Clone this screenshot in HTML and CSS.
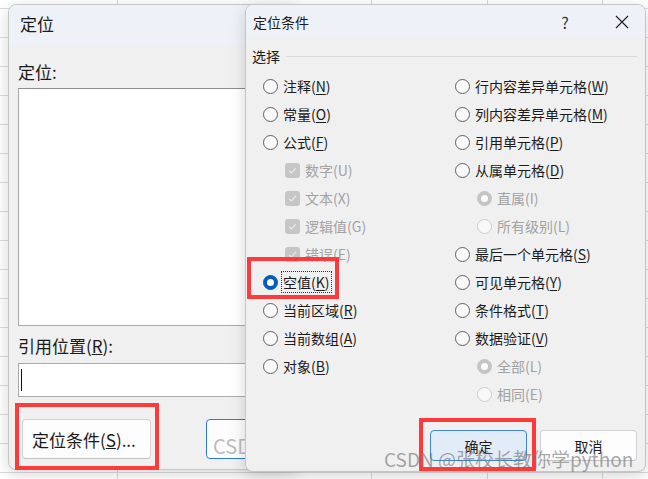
FILE: index.html
```html
<!DOCTYPE html>
<html lang="zh-CN">
  <head>
    <meta charset="UTF-8" />
    <title>定位条件</title>
    <link rel="stylesheet" href="styles.css">
  </head>
  <body>
    <div class="sheet">
      <!-- 定位 dialog (behind) -->
      <div class="dialog goto">
        <div class="titlebar">定位</div>
        <div class="goto-body">
          <div class="label">定位:</div>
          <div class="listbox"></div>
          <div class="label label-ref">引用位置(<u>R</u>):</div>
          <div class="textbox"><span class="caret"></span></div>
          <div class="goto-buttons">
            <button class="btn btn-special">定位条件(<u>S</u>)...</button>
            <button class="btn btn-ok-back"><span class="ghost">CSD</span></button>
          </div>
        </div>
      </div>

      <!-- 定位条件 dialog -->
      <div class="dialog special">
        <div class="titlebar">
          <span class="title">定位条件</span>
          <span class="tb-help">?</span>
          <span class="tb-close">
            <svg width="14" height="14" viewBox="0 0 14 14"><path d="M1 1 L13 13 M13 1 L1 13" stroke="#222" stroke-width="1.2" fill="none"/></svg>
          </span>
        </div>

        <div class="group-head">
          <span>选择</span>
          <span class="group-line"></span>
        </div>

        <div class="options">
          <div class="col col-left">
            <div class="opt"><span class="radio"></span><span>注释(<u>N</u>)</span></div>
            <div class="opt"><span class="radio"></span><span>常量(<u>O</u>)</span></div>
            <div class="opt"><span class="radio"></span><span>公式(<u>F</u>)</span></div>
            <div class="opt sub disabled"><span class="check"><svg width="15" height="15" viewBox="0 0 15 15"><path d="M4 7.8 L6.3 10 L11 5" stroke="#e9e9e9" stroke-width="1.1" fill="none"/></svg></span><span>数字(U)</span></div>
            <div class="opt sub disabled"><span class="check"><svg width="15" height="15" viewBox="0 0 15 15"><path d="M4 7.8 L6.3 10 L11 5" stroke="#e9e9e9" stroke-width="1.1" fill="none"/></svg></span><span>文本(X)</span></div>
            <div class="opt sub disabled"><span class="check"><svg width="15" height="15" viewBox="0 0 15 15"><path d="M4 7.8 L6.3 10 L11 5" stroke="#e9e9e9" stroke-width="1.1" fill="none"/></svg></span><span>逻辑值(G)</span></div>
            <div class="opt sub disabled"><span class="check"><svg width="15" height="15" viewBox="0 0 15 15"><path d="M4 7.8 L6.3 10 L11 5" stroke="#e9e9e9" stroke-width="1.1" fill="none"/></svg></span><span>错误(E)</span></div>
            <div class="opt"><span class="radio checked"></span><span class="focus">空值(<u>K</u>)</span></div>
            <div class="opt"><span class="radio"></span><span>当前区域(<u>R</u>)</span></div>
            <div class="opt"><span class="radio"></span><span>当前数组(<u>A</u>)</span></div>
            <div class="opt"><span class="radio"></span><span>对象(<u>B</u>)</span></div>
          </div>
          <div class="col col-right">
            <div class="opt"><span class="radio"></span><span>行内容差异单元格(<u>W</u>)</span></div>
            <div class="opt"><span class="radio"></span><span>列内容差异单元格(<u>M</u>)</span></div>
            <div class="opt"><span class="radio"></span><span>引用单元格(<u>P</u>)</span></div>
            <div class="opt"><span class="radio"></span><span>从属单元格(<u>D</u>)</span></div>
            <div class="opt sub disabled"><span class="radio checked"></span><span>直属(I)</span></div>
            <div class="opt sub disabled"><span class="radio"></span><span>所有级别(L)</span></div>
            <div class="opt"><span class="radio"></span><span>最后一个单元格(<u>S</u>)</span></div>
            <div class="opt"><span class="radio"></span><span>可见单元格(<u>Y</u>)</span></div>
            <div class="opt"><span class="radio"></span><span>条件格式(<u>T</u>)</span></div>
            <div class="opt"><span class="radio"></span><span>数据验证(<u>V</u>)</span></div>
            <div class="opt sub disabled"><span class="radio checked"></span><span>全部(L)</span></div>
            <div class="opt sub disabled"><span class="radio"></span><span>相同(E)</span></div>
          </div>
        </div>

        <div class="dialog-buttons">
          <button class="btn btn-primary">确定</button>
          <button class="btn btn-cancel">取消</button>
        </div>
      </div>

      <!-- annotations -->
      <div class="mark mark-special"></div>
      <div class="mark mark-blank"></div>
      <div class="mark mark-ok"></div>
      <div class="watermark">CSDN @张校长教你学python</div>
    </div>
  </body>
</html>
```

FILE: styles.css
```css
* {
  margin: 0;
  padding: 0;
  box-sizing: border-box;
}

body {
  width: 648px;
  height: 479px;
  overflow: hidden;
  font-family: "Noto Sans CJK SC", "Microsoft YaHei", sans-serif;
  color: #1b1b1b;
  background-color: #fff;
  background-image:
    linear-gradient(90deg,
      transparent 117px, #d6d6d6 117px, #d6d6d6 118px, transparent 118px,
      transparent 371px, #d6d6d6 371px, #d6d6d6 372px, transparent 372px,
      transparent 487px, #d6d6d6 487px, #d6d6d6 488px, transparent 488px,
      transparent 602px, #d6d6d6 602px, #d6d6d6 603px, transparent 603px),
    linear-gradient(#dcdcdc 1px, transparent 1px);
  background-size: 100% 100%, 100% 29px;
  background-position: 0 0, 0 8px;
}

.sheet {
  position: relative;
  width: 648px;
  height: 479px;
}

/* ---------- dialogs ---------- */

.dialog {
  position: absolute;
  background: #f0f0f0;
  border: 1px solid #c6c6c6;
  border-radius: 8px;
  overflow: hidden;
  box-shadow: 0 4px 16px rgba(0, 0, 0, 0.16);
}

.titlebar {
  background: #eef2f8;
}

.goto {
  left: 8px;
  top: 4px;
  width: 290px;
  height: 466px;
}

.goto .titlebar {
  height: 40px;
  line-height: 38px;
  padding-left: 11px;
  font-size: 17px;
}

.goto-body {
  padding: 14px 0 0 9px;
}

.label {
  height: 26px;
  line-height: 26px;
  font-size: 17px;
}

.label-ref {
  margin-top: 8px;
  height: 24px;
  line-height: 24px;
}

.listbox {
  margin-top: 3px;
  height: 238px;
  background: #fff;
  border: 1px solid #a9a9a9;
  border-top-color: #8c8c8c;
}

.textbox {
  margin-top: 5px;
  height: 34px;
  background: #fff;
  border: 1px solid #ababab;
  padding: 5px 0 0 2px;
}

.caret {
  display: block;
  width: 1px;
  height: 22px;
  background: #111;
}

.goto-buttons {
  display: flex;
  gap: 55px;
  margin-top: 22px;
  padding-left: 4px;
}

.btn {
  font-family: inherit;
  color: #1b1b1b;
  background: #fdfdfd;
  border: 1px solid #d3d3d3;
  border-bottom-color: #c2c2c2;
  border-radius: 4px;
  flex-shrink: 0;
}

.btn-special {
  width: 129px;
  height: 40px;
  font-size: 17px;
  text-align: left;
  padding-left: 9px;
}

.btn-ok-back {
  width: 90px;
  height: 40px;
  border: 1px solid #2f7ad4;
  text-align: left;
  padding: 16px 0 0 6px;
  overflow: hidden;
}

.ghost {
  font-size: 20px;
  line-height: 20px;
  color: #bdbdbd;
}

/* ---------- 定位条件 ---------- */

.special {
  left: 245px;
  top: 4px;
  width: 401px;
  height: 468px;
  display: flex;
  flex-direction: column;
}

.special .titlebar {
  display: flex;
  align-items: center;
  height: 33px;
  font-size: 14px;
}

.title {
  flex: 1;
  padding-left: 7px;
}

.tb-help {
  width: 40px;
  margin-right: 14px;
  text-align: center;
  font-size: 16px;
  color: #333;
}

.tb-close {
  width: 46px;
  display: flex;
  justify-content: center;
}

.group-head {
  display: flex;
  align-items: center;
  margin-top: 8px;
  height: 20px;
  padding: 0 8px 0 6px;
  font-size: 14px;
  line-height: 20px;
}

.group-line {
  flex: 1;
  height: 1px;
  margin-left: 6px;
  background: #d9d9d9;
}

.options {
  display: flex;
  margin-top: 6px;
  padding-left: 17px;
}

.col-left {
  width: 192px;
}

.opt {
  display: flex;
  align-items: center;
  gap: 5px;
  height: 28px;
  font-size: 14px;
  white-space: nowrap;
}

.opt u {
  text-underline-offset: 2px;
}

.opt.sub {
  padding-left: 22px;
}

.opt.disabled {
  color: #a2a2a2;
}

.radio {
  width: 15px;
  height: 15px;
  border: 1px solid #606060;
  border-radius: 50%;
  background: #f9f9f9;
  flex-shrink: 0;
  display: flex;
  align-items: center;
  justify-content: center;
}

.radio.checked {
  border-color: #005fb8;
  background: #005fb8;
}

.radio.checked::after {
  content: "";
  width: 7px;
  height: 7px;
  border-radius: 50%;
  background: #fff;
}

.disabled .radio {
  border-color: #cfcfcf;
  background: #f8f8f8;
}

.disabled .radio.checked {
  border-color: #c4c4c4;
  background: #c4c4c4;
}

.check {
  width: 15px;
  height: 15px;
  border-radius: 3px;
  background: #c6c6c6;
  flex-shrink: 0;
}

.check svg {
  display: block;
}

.focus {
  outline: 1px dotted #333;
  outline-offset: 1px;
  line-height: 18px;
}

.dialog-buttons {
  margin-top: auto;
  display: flex;
  justify-content: flex-end;
  gap: 13px;
  padding: 0 8px 10px 0;
}

.btn-primary,
.btn-cancel {
  width: 97px;
  height: 31px;
  font-size: 14px;
}

.btn-primary {
  background: #e1ecf8;
  border: 1px solid #3f86d6;
}

/* ---------- annotations ---------- */

.mark {
  position: absolute;
  border: 4px solid #ff3a3a;
}

.mark-special {
  left: 15px;
  top: 403px;
  width: 144px;
  height: 67px;
}

.mark-blank {
  left: 247px;
  top: 257px;
  width: 92px;
  height: 42px;
}

.mark-ok {
  left: 419px;
  top: 418px;
  width: 117px;
  height: 53px;
}

.watermark {
  position: absolute;
  left: 384px;
  top: 447px;
  font-size: 19px;
  line-height: 24px;
  color: rgba(110, 110, 110, 0.6);
  white-space: nowrap;
}
```
